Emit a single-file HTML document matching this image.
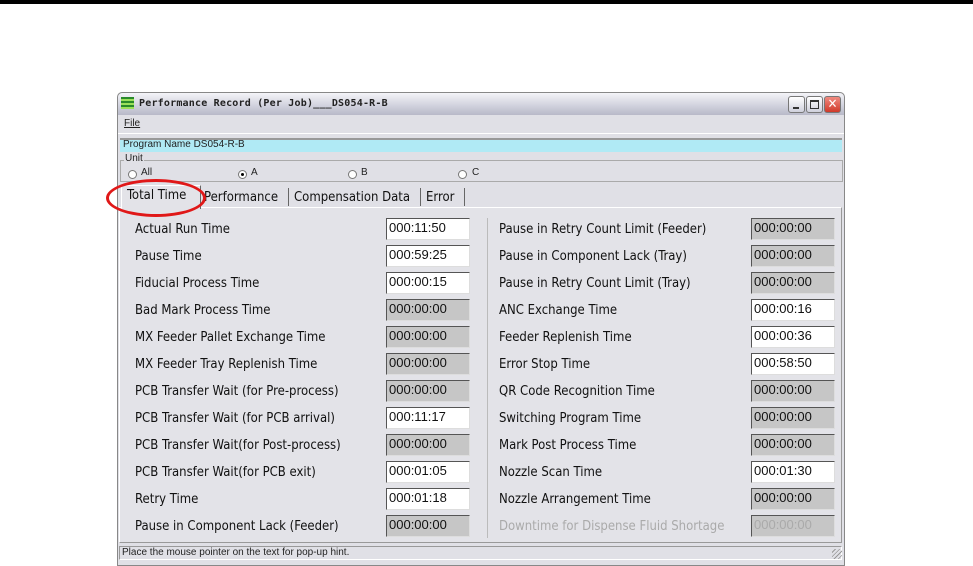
<!DOCTYPE html>
<html><head><style>
*{margin:0;padding:0;box-sizing:border-box}
body{width:973px;height:566px;background:#fff;position:relative;overflow:hidden;font-family:"DejaVu Sans Condensed","Liberation Sans",sans-serif}
.a{position:absolute}
.topline{left:0;top:0;width:973px;height:4px;background:#000}
.win{left:117px;top:92px;width:728px;height:474px;background:#e0e0e6;border:1px solid #888;border-radius:5px 5px 0 0}
.title{left:118px;top:93px;width:726px;height:22px;background:linear-gradient(#f4f4f8,#cfd0dc 60%,#b8b9c8);border-radius:5px 5px 0 0}
.tt{left:139px;top:98px;font-size:10px;font-weight:bold;letter-spacing:0.2px;color:#222;font-family:"DejaVu Sans Mono",monospace}
.btn{top:96px;width:17px;height:17px;border:1px solid #777;border-radius:3px;background:linear-gradient(#fff,#cfd0dc)}
.lbl{font-size:13px;color:#111;font-family:"DejaVu Sans Condensed","Liberation Sans",sans-serif}
.box{width:84px;height:22px;border:1px solid #555;border-right-color:#ddd;border-bottom-color:#ddd;font-size:13px;padding:1px 2px;font-family:"Liberation Sans Narrow","Liberation Sans",sans-serif;color:#111}
.w{background:#fff}.g{background:#c6c6c6}
.sm{font-size:10px;color:#222;font-family:"Liberation Sans Narrow","Liberation Sans",sans-serif}
.rad{width:9px;height:9px;border:1px solid #777;border-radius:50%;background:#fff}
</style></head><body>
<div class="a topline"></div>
<div class="a win"></div>
<div class="a title"></div>
<div class="a" style="left:121px;top:97px;width:13px;height:12px;background:repeating-linear-gradient(#2a8a2a 0 2px,#9be05a 2px 4px)"></div>
<div class="a tt">Performance Record (Per Job)___DS054-R-B</div>
<div class="a btn" style="left:788px"><div class="a" style="left:4px;top:10px;width:6px;height:2px;background:#333"></div></div>
<div class="a btn" style="left:806px"><div class="a" style="left:3px;top:3px;width:9px;height:9px;border:1px solid #333;border-top-width:2px"></div></div>
<div class="a btn" style="left:824px;background:linear-gradient(#f08a80,#d03a2a);color:#fff;font-size:13px;text-align:center;line-height:15px">✕</div>
<div class="a sm" style="left:124px;top:118px;text-decoration:underline">File</div>
<div class="a" style="left:118px;top:133px;width:726px;height:1px;background:#fff"></div>
<div class="a" style="left:120px;top:138px;width:722px;height:14px;background:#b0eaf5;border-top:2px solid #999"></div>
<div class="a sm" style="left:123px;top:139px">Program Name DS054-R-B</div>
<div class="a" style="left:120px;top:160px;width:723px;height:22px;border:1px solid #aaa"></div>
<div class="a sm" style="left:124px;top:153px;background:#e0e0e6;padding:0 1px">Unit</div>
<div class="a rad" style="left:128px;top:170px"></div><div class="a sm" style="left:141px;top:167px">All</div>
<div class="a rad" style="left:238px;top:170px"><div class="a" style="left:2px;top:2px;width:3px;height:3px;background:#000;border-radius:50%"></div></div><div class="a sm" style="left:251px;top:167px">A</div>
<div class="a rad" style="left:348px;top:170px"></div><div class="a sm" style="left:361px;top:167px">B</div>
<div class="a rad" style="left:458px;top:170px"></div><div class="a sm" style="left:472px;top:167px">C</div>
<div class="a" style="left:119px;top:207px;width:723px;height:336px;border:1px solid #999;border-top-color:#fff;border-left-color:#fff;background:#e3e3e8"></div>
<div class="a" style="left:121px;top:185px;width:80px;height:24px;background:#e3e3e8;border:1px solid #fff;border-right-color:#666;border-bottom:none"></div>
<div class="a lbl" style="left:127px;top:188px;font-size:13px">Total Time</div>
<div class="a lbl" style="left:204px;top:190px;font-size:13px">Performance</div>
<div class="a" style="left:288px;top:188px;width:1px;height:18px;background:#666"></div>
<div class="a lbl" style="left:294px;top:190px;font-size:13px">Compensation Data</div>
<div class="a" style="left:420px;top:188px;width:1px;height:18px;background:#666"></div>
<div class="a lbl" style="left:426px;top:190px;font-size:13px">Error</div>
<div class="a" style="left:464px;top:188px;width:1px;height:18px;background:#666"></div>
<div class="a" style="left:106px;top:179px;width:100px;height:38px;border:3px solid #e01818;border-radius:50%"></div>
<div class="a" style="left:487px;top:218px;width:1px;height:320px;background:#bbb"></div>
<div id="rows"></div>
<div class="a" style="left:119px;top:546px;width:723px;height:14px;border:1px solid #999;border-right-color:#fff;border-bottom-color:#fff"></div>
<div class="a sm" style="left:122px;top:547px">Place the mouse pointer on the text for pop-up hint.</div>
<div class="a" style="left:832px;top:549px;width:10px;height:10px;background:repeating-linear-gradient(135deg,transparent 0 2px,#999 2px 3px)"></div>
<script>
var L=[["Actual Run Time","000:11:50",1],["Pause Time","000:59:25",1],["Fiducial Process Time","000:00:15",1],["Bad Mark Process Time","000:00:00",0],["MX Feeder Pallet Exchange Time","000:00:00",0],["MX Feeder Tray Replenish Time","000:00:00",0],["PCB Transfer Wait (for Pre-process)","000:00:00",0],["PCB Transfer Wait (for PCB arrival)","000:11:17",1],["PCB Transfer Wait(for Post-process)","000:00:00",0],["PCB Transfer Wait(for PCB exit)","000:01:05",1],["Retry Time","000:01:18",1],["Pause in Component Lack (Feeder)","000:00:00",0]];
var R=[["Pause in Retry Count Limit (Feeder)","000:00:00",0],["Pause in Component Lack (Tray)","000:00:00",0],["Pause in Retry Count Limit (Tray)","000:00:00",0],["ANC Exchange Time","000:00:16",1],["Feeder Replenish Time","000:00:36",1],["Error Stop Time","000:58:50",1],["QR Code Recognition Time","000:00:00",0],["Switching Program Time","000:00:00",0],["Mark Post Process Time","000:00:00",0],["Nozzle Scan Time","000:01:30",1],["Nozzle Arrangement Time","000:00:00",0],["Downtime for Dispense Fluid Shortage","000:00:00",2]];
var tops=[218,245,272,299,326,353,380,407,434,461,488,515],h="";
function add(a,lx,bx){a.forEach(function(r,i){var t=tops[i];var c=r[2]==2?"color:#aaa;":"";
h+='<div class="a lbl" style="left:'+lx+'px;top:'+(t+4)+'px;'+c+'">'+r[0]+'</div>';
h+='<div class="a box '+(r[2]==1?'w':'g')+'" style="left:'+bx+'px;top:'+t+'px;'+c+'">'+r[1]+'</div>';});}
add(L,135,386);add(R,499,751);
document.getElementById("rows").innerHTML=h;
</script>
</body></html>
